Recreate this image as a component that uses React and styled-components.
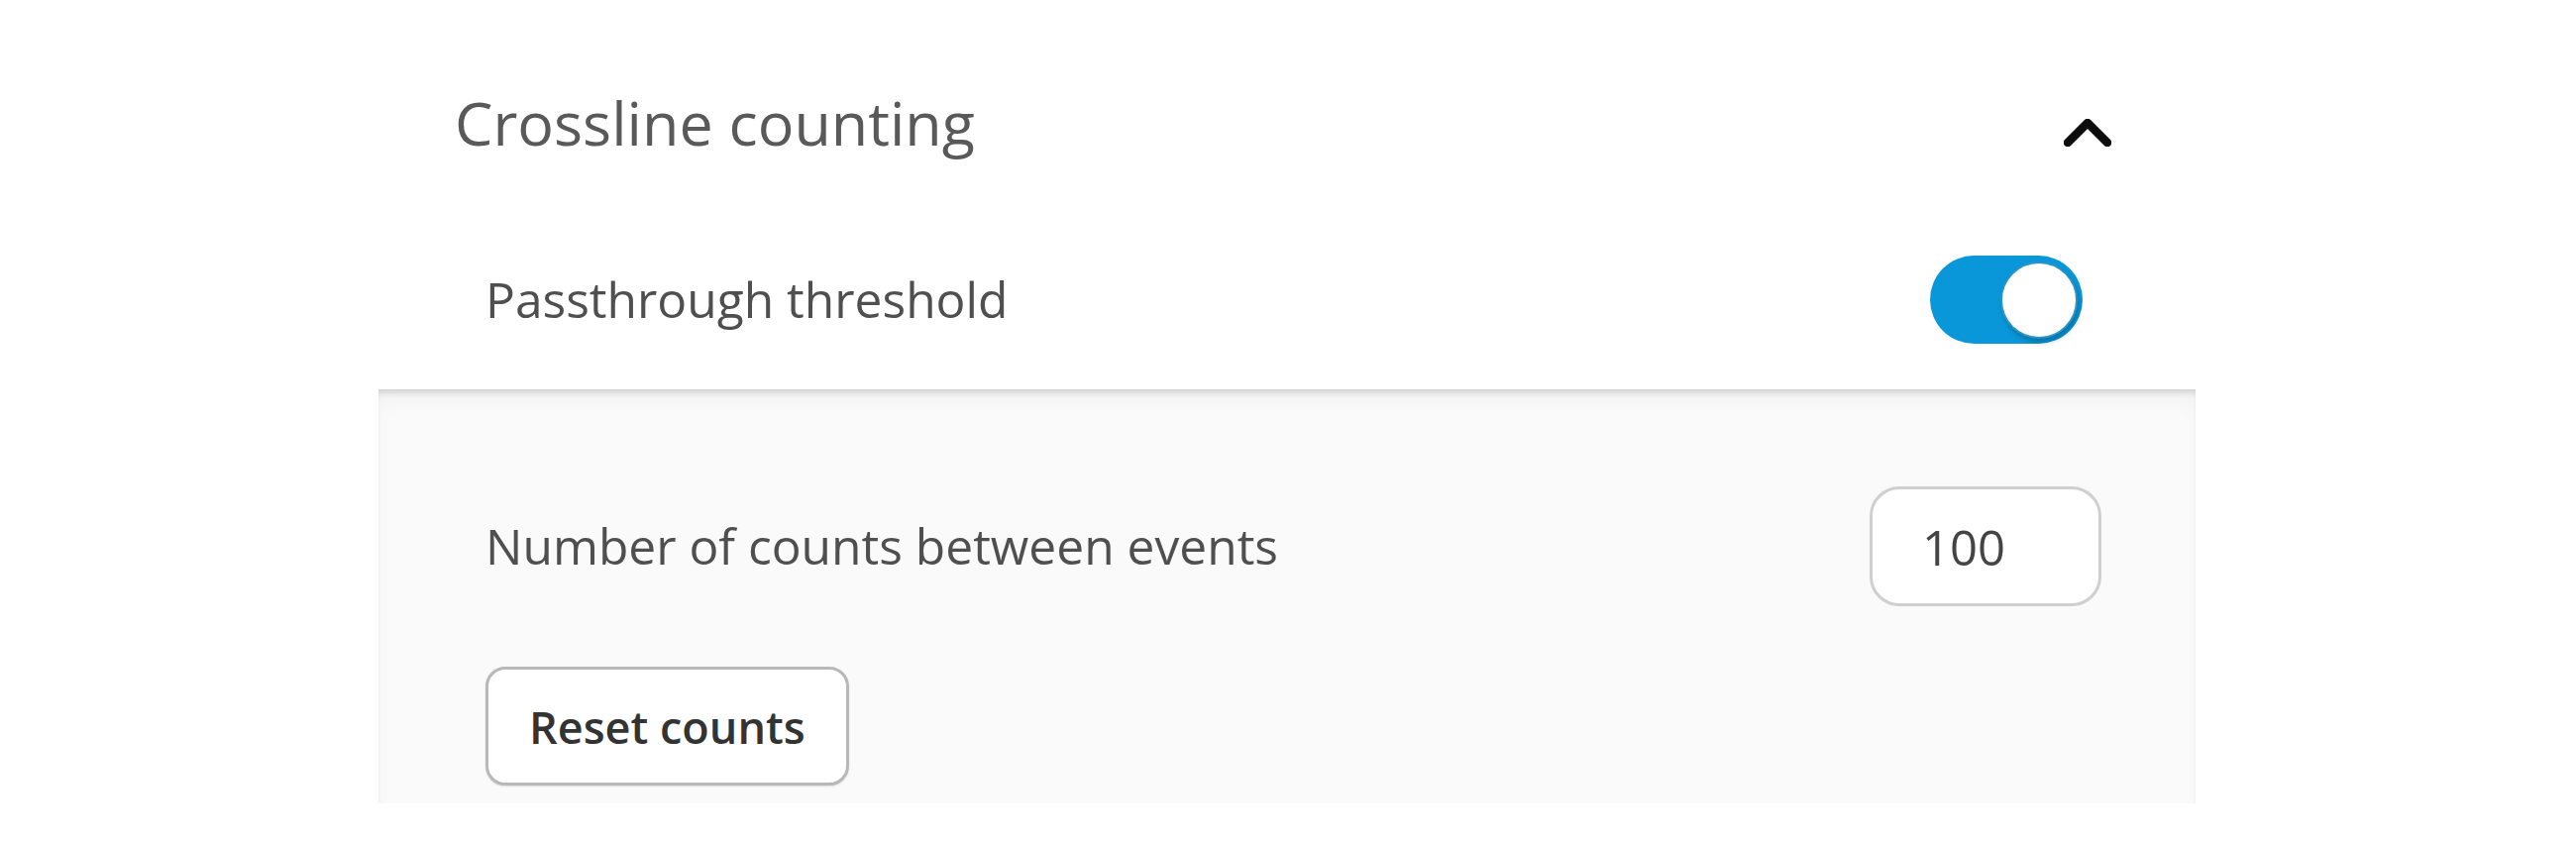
import React from "react";
import styled, { createGlobalStyle } from "styled-components";

const GlobalStyle = createGlobalStyle`
  html, body {
    margin: 0;
    padding: 0;
    background: #ffffff;
    font-family: "Open Sans", "Noto Sans", sans-serif;
  }
  * { box-sizing: border-box; }
`;

const Section = styled.section`
  margin: 36px 0 0 382px;
  width: 1834px;
  background: #ffffff;
`;

const Header = styled.div`
  height: 176px;
  display: flex;
  align-items: center;
  justify-content: space-between;
  padding: 0 85px 0 77px;
`;

const Title = styled.h2`
  margin: 0;
  font-family: "Open Sans", sans-serif;
  font-weight: 400;
  font-size: 61px;
  line-height: 1.2;
  color: #595959;
`;

const Chevron = styled.svg`
  display: block;
  margin-top: 20px;
`;

const SettingRow = styled.div`
  height: ${(p) => p.$height}px;
  display: flex;
  align-items: center;
  justify-content: space-between;
  padding: 0 ${(p) => p.$right}px 0 108px;
`;

const Label = styled.span`
  font-family: "Open Sans", sans-serif;
  font-size: 49.7px;
  line-height: 1.2;
  color: #4f4f4f;
`;

const Track = styled.div`
  width: 154px;
  height: 89px;
  border-radius: 45px;
  background: #0a97d9;
  display: flex;
  align-items: center;
  justify-content: flex-end;
  padding-right: 5px;
`;

const Knob = styled.div`
  width: 78px;
  height: 78px;
  border-radius: 50%;
  background: #ffffff;
  border: 2px solid #2a93c8;
  box-shadow: 2px 4px 5px rgba(0, 0, 0, 0.22);
`;

const Panel = styled.div`
  background: #fafafa;
  padding: 98px 95px 18px 108px;
  box-shadow: inset 0 6px 6px -3px rgba(0, 0, 0, 0.14),
    inset 0 16px 22px -8px rgba(0, 0, 0, 0.05);
`;

const FieldRow = styled.div`
  display: flex;
  align-items: center;
  justify-content: space-between;
  height: 121px;
`;

const NumberInput = styled.input`
  width: 234px;
  height: 121px;
  border: 3px solid #cfcfcf;
  border-radius: 30px;
  background: #ffffff;
  padding: 0 0 0 50px;
  font-family: "Open Sans", sans-serif;
  font-size: 49px;
  color: #444444;
  outline: none;
`;

const Button = styled.button`
  margin-top: 61px;
  height: 120px;
  padding: 0 41px;
  border: 3px solid #b8b8b8;
  border-radius: 20px;
  background: #ffffff;
  box-shadow: 0 1px 2px rgba(0, 0, 0, 0.12);
  font-family: "Open Sans", sans-serif;
  font-weight: 600;
  font-size: 45px;
  color: #333333;
  cursor: pointer;
`;

export default function App() {
  return (
    <>
      <GlobalStyle />
      <Section>
        <Header>
          <Title>Crossline counting</Title>
          <Chevron width="48" height="28" viewBox="0 0 48 28" aria-hidden="true">
            <polyline
              points="4,24 24,4 44,24"
              fill="none"
              stroke="#0d0d0d"
              strokeWidth="8.5"
              strokeLinecap="round"
              strokeLinejoin="round"
            />
          </Chevron>
        </Header>
        <SettingRow $height={181} $right={114}>
          <Label>Passthrough threshold</Label>
          <Track role="switch" aria-checked="true">
            <Knob />
          </Track>
        </SettingRow>
        <Panel>
          <FieldRow>
            <Label>Number of counts between events</Label>
            <NumberInput type="text" defaultValue="100" />
          </FieldRow>
          <Button type="button">Reset counts</Button>
        </Panel>
      </Section>
    </>
  );
}
